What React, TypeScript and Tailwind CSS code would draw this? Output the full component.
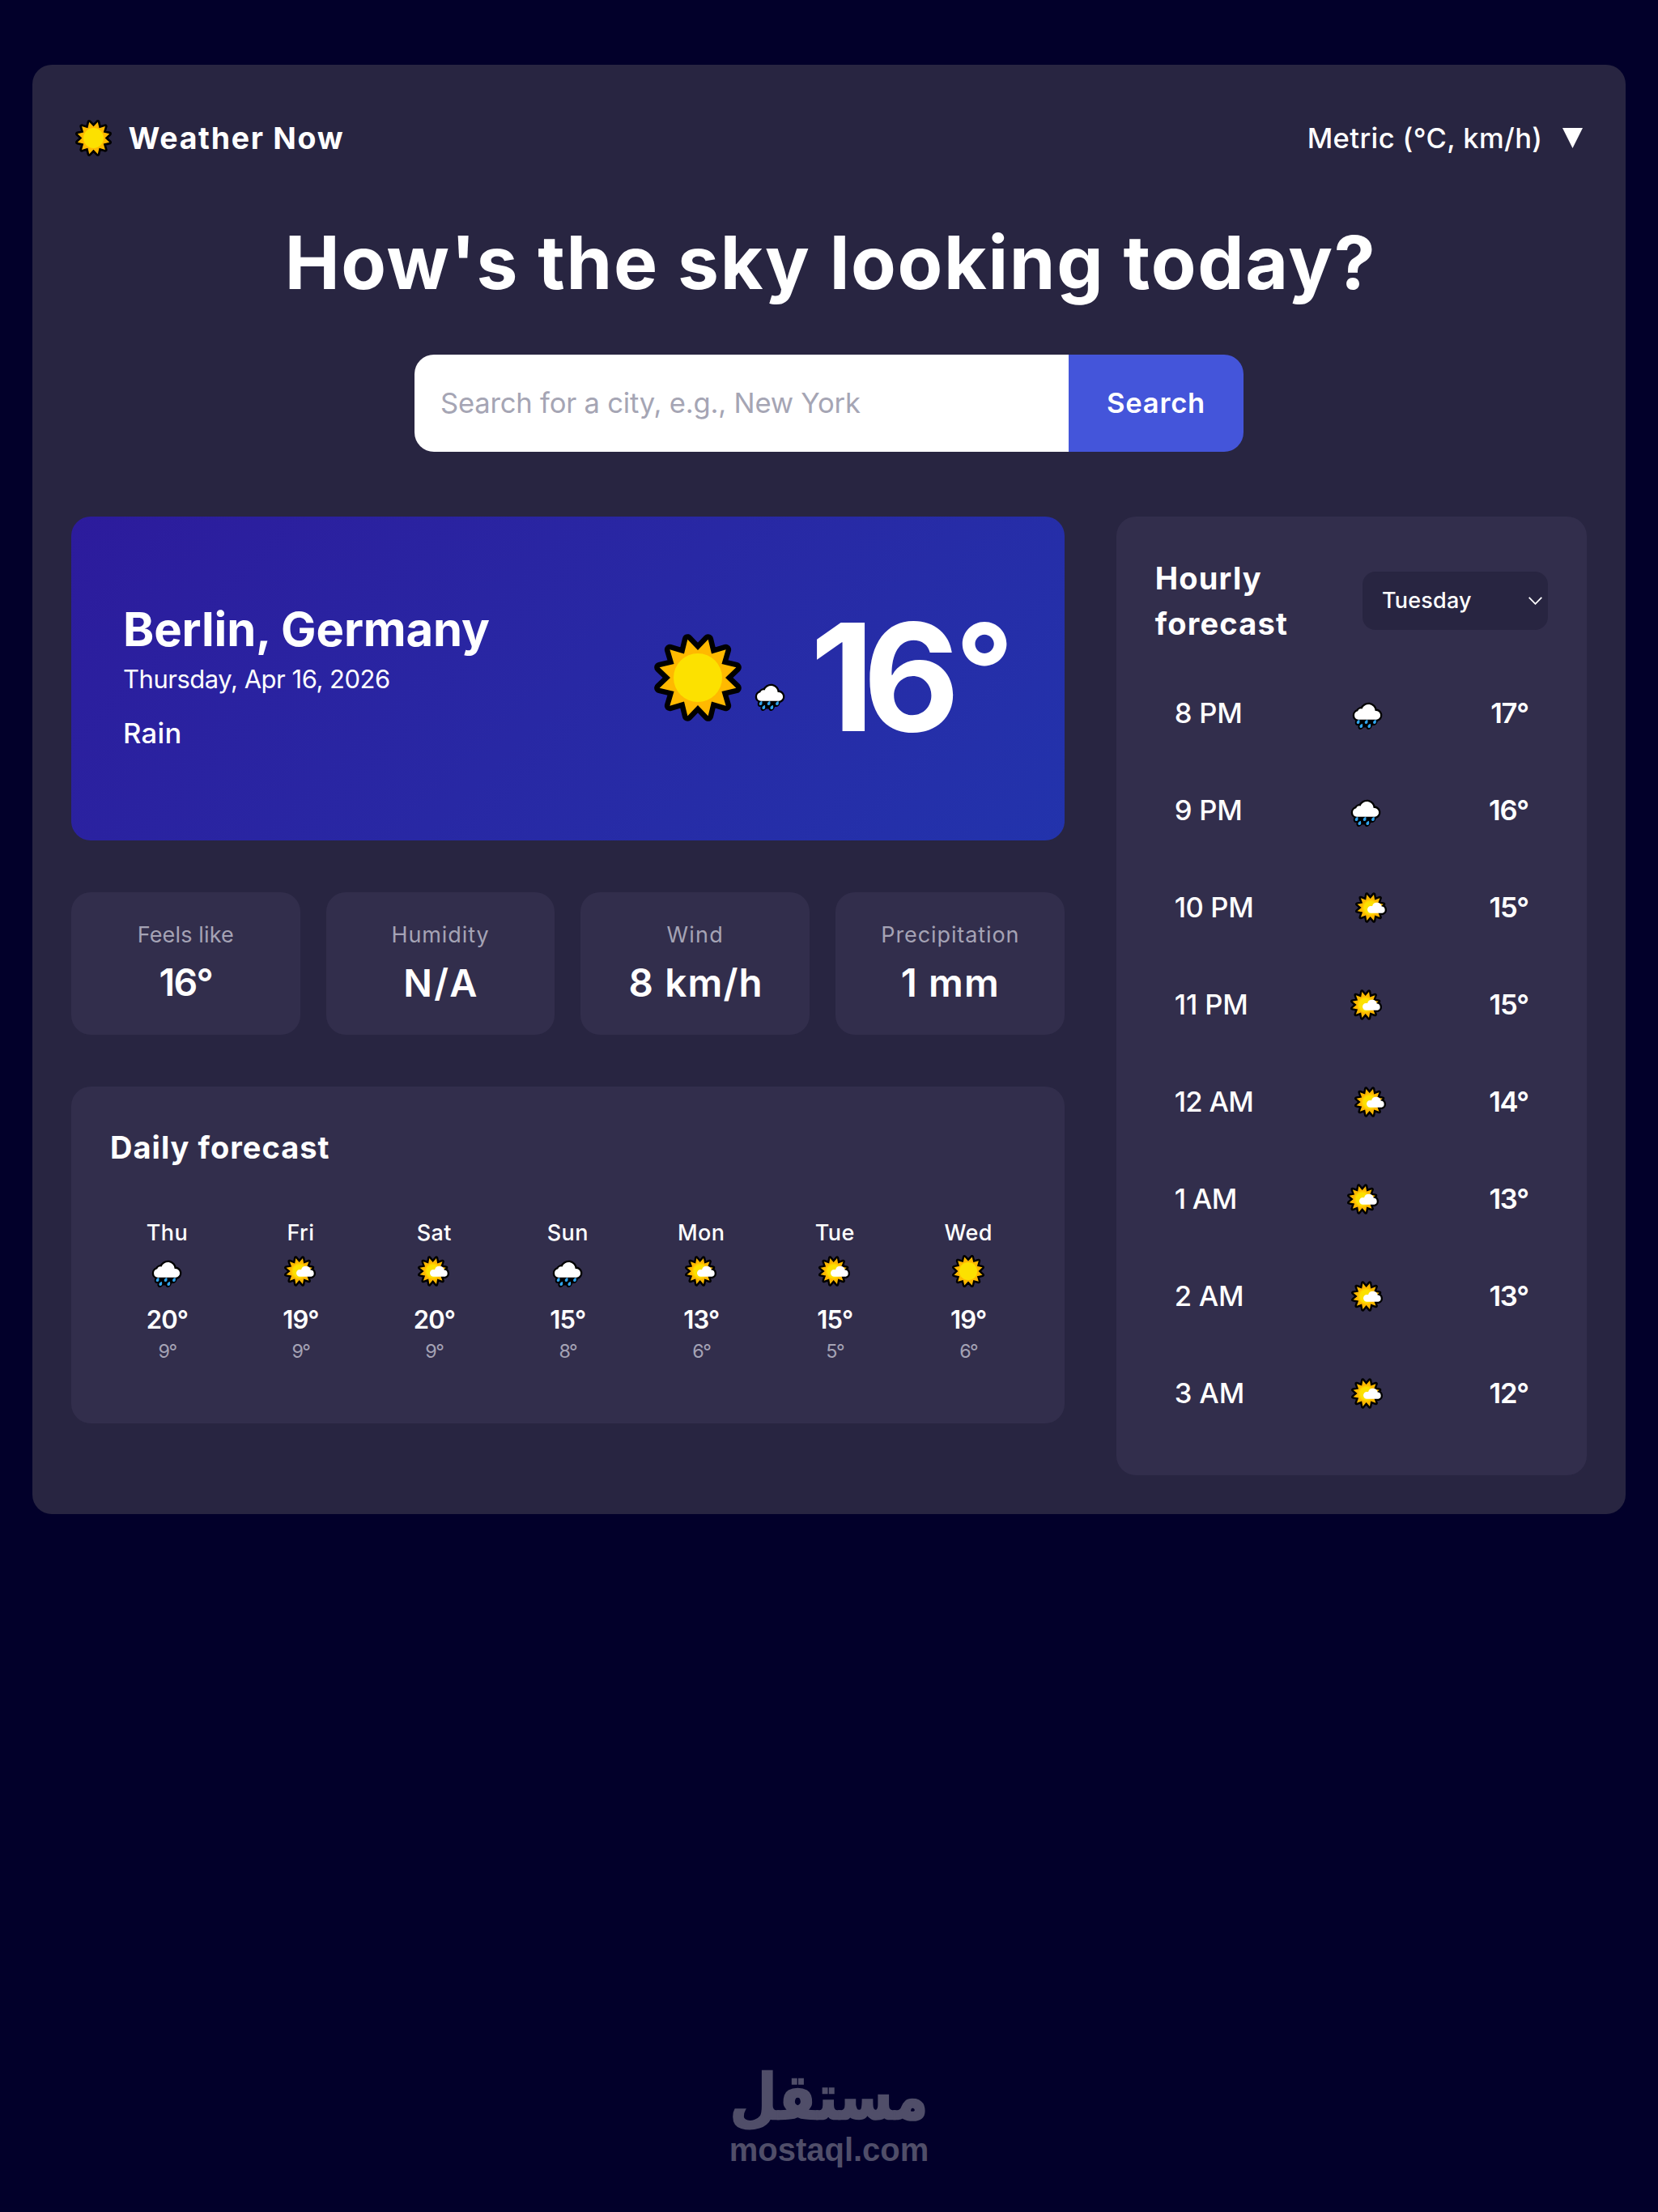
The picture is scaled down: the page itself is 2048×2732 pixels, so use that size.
type Condition = 'sun' | 'partly' | 'rain'

// Zig-zag outline of a 12-ray sun, first ray 15° off the vertical
const star = (tip: number, valley: number) =>
  Array.from({ length: 24 }, (_, i) => {
    const r = i % 2 ? tip : valley
    const a = (i * Math.PI) / 12
    return `${(r * Math.sin(a)).toFixed(2)},${(-r * Math.cos(a)).toFixed(2)}`
  }).join(' ')

function SunIcon({ className }: { className: string }) {
  return (
    <svg viewBox="-54 -54 108 108" className={className}>
      <polygon points={star(49, 34)} fill="#FFB900" stroke="#000" strokeWidth={13} strokeLinejoin="round" />
      <polygon points={star(49, 34)} fill="#FFB900" />
      <circle r={30} fill="#FCE100" />
    </svg>
  )
}

function RainIcon({ className }: { className: string }) {
  const cloud = 'M112 147a16 16 0 0 1-2-31.5a14 14 0 0 1 16-8.500a25 25 0 0 1 48.500 7.500a16.300 16.300 0 0 1 5.500 32.500z'
  const drops = [[111, 155], [141, 155], [172, 155], [122, 170], [152, 170]]
  return (
    <svg viewBox="73.5 51.5 144 144" className={className}>
      <path d={cloud} fill="#000" stroke="#000" strokeWidth={14} strokeLinejoin="round" />
      <path d="M104 146h76l-8 18l-20 12h-30l-14-12z" fill="#000" />
      {drops.map(([x, y]) => (
        <ellipse key={x} cx={x} cy={y} rx={10.5} ry={14} fill="#000" transform={`rotate(25 ${x} ${y})`} />
      ))}
      {drops.map(([x, y]) => (
        <path
          key={x}
          d={`M${x + 5} ${y - 8}c2 8 2 15-4.500 15.500c-6.500 0-7-7-4-10c2-2.500 6-3.500 8.500-5.500z`}
          fill="#30A5EE"
        />
      ))}
      <path d={cloud} fill="#fff" />
    </svg>
  )
}

function PartlyIcon({ className }: { className: string }) {
  const cloud = 'M2 20a12.500 12.500 0 0 1 0-26c2 0 4 0 5 .500a18 18 0 0 1 35 1a12.500 12.500 0 0 1 3 24.500z'
  return (
    <svg viewBox="-68 -72 144 144" className={className}>
      <path d={cloud} stroke="#000" strokeWidth={14} strokeLinejoin="round" />
      <polygon points={star(51, 34)} stroke="#000" strokeWidth={13.5} strokeLinejoin="round" />
      <polygon points={star(50, 33)} fill="#FFB900" />
      <circle r={29} fill="#FFD000" />
      <circle r={24} fill="#FCE100" />
      <path d={cloud} fill="#fff" />
    </svg>
  )
}

function WeatherIcon({ type }: { type: Condition }) {
  if (type === 'rain') return <RainIcon className="size-12 shrink-0" />
  if (type === 'partly') return <PartlyIcon className="size-12 shrink-0" />
  return <SunIcon className="size-10 shrink-0" />
}

const stats = [
  { label: 'Feels like', value: '16°', labelClass: 'tracking-[0.16px]', valueClass: 'tracking-[-1.7px]' },
  { label: 'Humidity', value: 'N/A', labelClass: 'tracking-[0.9px]', valueClass: 'pl-[2px] text-[47px] tracking-[2.3px]' },
  { label: 'Wind', value: '8 km/h', labelClass: 'tracking-[1.2px]', valueClass: 'pl-[2px] text-[47.5px] tracking-[1.2px]' },
  { label: 'Precipitation', value: '1 mm', labelClass: 'pl-[1px] tracking-[0.9px]', valueClass: 'pl-[1px] text-[47.5px] tracking-[1.2px]' },
]

const days: { day: string; icon: Condition; high: string; low: string }[] = [
  { day: 'Thu', icon: 'rain', high: '20°', low: '9°' },
  { day: 'Fri', icon: 'partly', high: '19°', low: '9°' },
  { day: 'Sat', icon: 'partly', high: '20°', low: '9°' },
  { day: 'Sun', icon: 'rain', high: '15°', low: '8°' },
  { day: 'Mon', icon: 'partly', high: '13°', low: '6°' },
  { day: 'Tue', icon: 'partly', high: '15°', low: '5°' },
  { day: 'Wed', icon: 'sun', high: '19°', low: '6°' },
]

const hours: { time: string; icon: Condition; temp: string; timeClass: string }[] = [
  { time: '8 PM', icon: 'rain', temp: '17°', timeClass: 'w-[214px] tracking-[-0.2px]' },
  { time: '9 PM', icon: 'rain', temp: '16°', timeClass: 'w-[212.5px] tracking-[-0.2px]' },
  { time: '10 PM', icon: 'partly', temp: '15°', timeClass: 'w-[219px] tracking-[-0.4px]' },
  { time: '11 PM', icon: 'partly', temp: '15°', timeClass: 'w-[213px] tracking-[-0.1px]' },
  { time: '12 AM', icon: 'partly', temp: '14°', timeClass: 'w-[218px] tracking-[-0.7px]' },
  { time: '1 AM', icon: 'partly', temp: '13°', timeClass: 'w-[209.5px] tracking-[-0.7px]' },
  { time: '2 AM', icon: 'partly', temp: '13°', timeClass: 'w-[214px] tracking-[-0.2px]' },
  { time: '3 AM', icon: 'partly', temp: '12°', timeClass: 'w-[214.5px] tracking-[-0.1px]' },
]

export default function App() {
  return (
    <div className="flex min-h-[2732px] flex-col bg-[#02002a] px-10 pt-20 font-['Inter',sans-serif] text-white">
      <main className="h-[1790px] rounded-3xl bg-[#282541] p-12">
        <header className="flex h-[84px] items-center justify-between">
          <div className="flex items-center gap-[21px] pl-[4.5px]">
            <SunIcon className="size-[45px]" />
            <span className="pt-0.5 text-[37.5px] font-bold tracking-[1.7px]">Weather Now</span>
          </div>
          <button className="flex items-center gap-[24.5px] pr-[5px]">
            <span className="pt-0.5 text-[34.6px] font-medium tracking-[0.37px]">Metric (°C, km/h)</span>
            <svg viewBox="0 0 25 25" className="mt-0.5 size-[25px]">
              <polygon points="0,0 25,0 12.5,25" fill="#fff" />
            </svg>
          </button>
        </header>

        <h1 className="mt-[52px] pl-1 text-center text-[91px] leading-[120px] font-bold tracking-[1.69px]">
          How's the sky looking today?
        </h1>

        <form className="mx-auto mt-[54px] flex h-[120px] w-[1024px] overflow-hidden rounded-3xl">
          <input
            type="text"
            placeholder="Search for a city, e.g., New York"
            className="min-w-0 flex-1 bg-white px-8 text-[34.6px] tracking-[-0.2px] placeholder:text-[#a5a5b4]"
          />
          <button type="button" className="w-[216px] bg-[#4455da] text-[34.6px] font-semibold tracking-[0.75px]">
            Search
          </button>
        </form>

        <div className="mt-20 grid h-[1184px] grid-cols-3 gap-16">
          <div className="col-span-2">
            <section className="flex h-[400px] items-center justify-between rounded-3xl bg-linear-135 from-[#2c1b9c] to-[#2233ac] px-16">
              <div className="pb-[4.5px]">
                <h2 className="text-[58px] leading-[76px] font-bold tracking-[-0.15px]">Berlin, Germany</h2>
                <p className="text-[31px] leading-[48px] tracking-[-0.47px]">Thursday, Apr 16, 2026</p>
                <p className="mt-4 text-[34.6px] leading-[53px] font-medium tracking-[0.3px]">Rain</p>
              </div>
              <div className="flex items-center">
                <SunIcon className="mb-0.5 size-[108px]" />
                <RainIcon className="mt-[39px] ml-[11px] size-12" />
                <p className="mb-1 ml-[25.5px] w-[250px] text-[184px] leading-none font-bold tracking-[-14px] whitespace-nowrap">
                  16<span className="ml-[8.5px] align-[20px] text-[157px] leading-none">°</span>
                </p>
              </div>
            </section>

            <section className="mt-16 grid grid-cols-4 gap-8">
              {stats.map(s => (
                <div key={s.label} className="h-44 rounded-3xl bg-[#322e4c] pt-[33px] text-center">
                  <p className={`text-[27px] leading-[39px] text-[#a5a3b5] ${s.labelClass}`}>{s.label}</p>
                  <p className={`mt-2 text-[46.5px] leading-[63px] font-semibold ${s.valueClass}`}>{s.value}</p>
                </div>
              ))}
            </section>

            <section className="mt-16 h-[416px] rounded-3xl bg-[#322e4c] p-12">
              <h3 className="text-[38px] leading-[54px] font-bold tracking-[1.03px]">Daily forecast</h3>
              <div className="mt-[59px] grid grid-cols-7 gap-6 text-center">
                {days.map(d => (
                  <div key={d.day}>
                    <p className="text-[27px] leading-10 font-medium tracking-[0.4px]">{d.day}</p>
                    <div className="flex h-[53px] items-center justify-center">
                      <WeatherIcon type={d.icon} />
                    </div>
                    <p className="mt-3 text-[31px] leading-[44px] font-semibold tracking-[-0.9px]">{d.high}</p>
                    <p className="text-[23.3px] leading-[34px] tracking-[-1.5px] text-[#a5a3b5]">{d.low}</p>
                  </div>
                ))}
              </div>
            </section>
          </div>

          <aside className="rounded-3xl bg-[#322e4c] px-12 pt-12 pb-10">
            <div className="flex items-center justify-between">
              <h3 className="w-[180px] text-[38px] leading-[56px] font-bold tracking-[1.2px]">Hourly forecast</h3>
              <button className="flex h-[72px] w-[229px] items-center justify-between rounded-2xl bg-[#282541] pr-[7px] pl-6">
                <span className="pt-px text-[27px] font-medium tracking-[0.19px]">Tuesday</span>
                <svg viewBox="0 0 17 10" className="h-2.5 w-[17px]">
                  <path d="M.7 .8L8.500 8.800L16.300 .8" fill="none" stroke="#fff" strokeWidth={1.8} />
                </svg>
              </button>
            </div>
            <ul className="mt-[23px]">
              {hours.map(h => (
                <li key={h.time} className="flex h-[120px] items-center px-6">
                  <span className={`text-[34.6px] font-medium ${h.timeClass}`}>{h.time}</span>
                  <WeatherIcon type={h.icon} />
                  <span className="ml-auto text-[34.6px] font-semibold tracking-[-1.2px]">{h.temp}</span>
                </li>
              ))}
            </ul>
          </aside>
        </div>
      </main>

      <footer className="mx-auto mt-auto w-[248px] pb-[55px] text-center whitespace-nowrap text-[#504e69]">
        <p
          dir="rtl"
          className="h-[73px] origin-bottom scale-y-[1.15] font-['DejaVu_Sans',sans-serif] text-[67px] leading-[73px] font-bold [-webkit-text-stroke:2px_#504e69]"
        >
          مستقل
        </p>
        <p className="font-['Liberation_Sans',sans-serif] text-[40px] leading-[44px] font-bold">mostaql.com</p>
      </footer>
    </div>
  )
}
